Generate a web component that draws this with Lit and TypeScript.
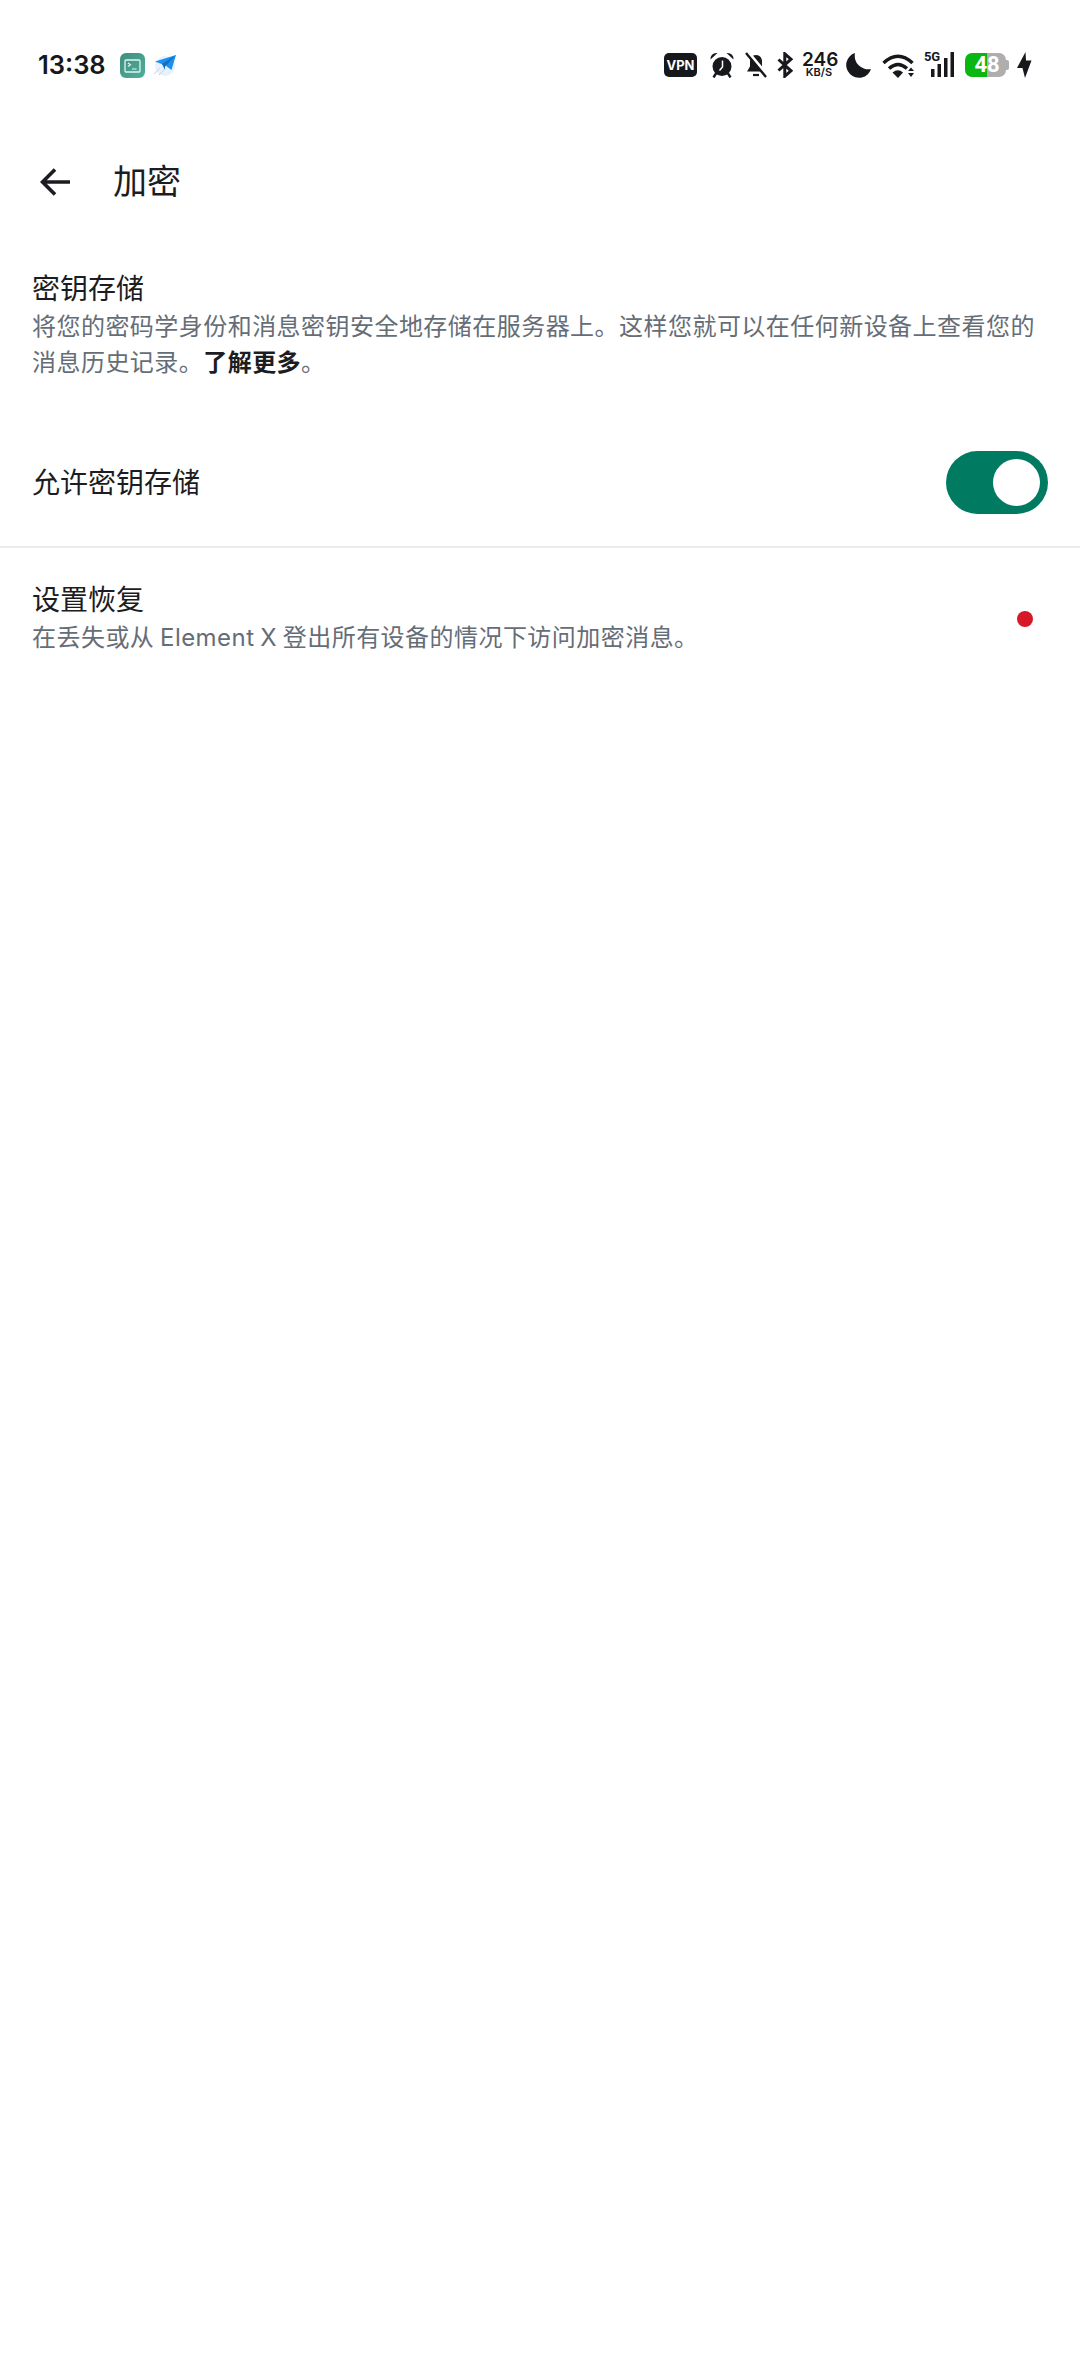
import { LitElement, css, html } from "lit"
import { customElement } from "lit/decorators.js"

@customElement("status-bar")
class StatusBar extends LitElement {
  static styles = css`
    :host {
      display: flex;
      align-items: center;
      height: 72px;
      margin-top: 29px;
      padding: 0 48px 0 38px;
      color: #16181c;
      font-family: Inter, "Noto Sans", sans-serif;
    }
    svg {
      display: block;
      flex: none;
    }
    .time {
      width: 68px;
      margin-right: 14px;
      font-size: 25.5px;
      font-weight: 600;
      line-height: 28px;
      white-space: nowrap;
    }
    .apps {
      display: flex;
      align-items: center;
      gap: 9px;
    }
    .icons {
      display: flex;
      align-items: center;
      margin-left: auto;
    }
    .vpn {
      width: 33px;
      height: 24px;
      margin-right: 13px;
      border-radius: 5px;
      background: #16181c;
      color: #fff;
      font-size: 13px;
      font-weight: 700;
      line-height: 24px;
      text-align: center;
    }
    .speed {
      width: 34px;
      margin: 0 10px 0 9px;
      text-align: center;
      font-weight: 600;
    }
    .speed div:first-child {
      font-size: 19px;
      line-height: 15px;
    }
    .speed div:last-child {
      font-size: 11px;
      line-height: 11px;
    }
    .signal {
      position: relative;
      width: 31px;
      height: 26px;
      margin: 0 11px 0 8px;
    }
    .signal span {
      position: absolute;
      left: 1px;
      top: -2px;
      font-family: Roboto, sans-serif;
      font-size: 13px;
      font-weight: 700;
      letter-spacing: -0.3px;
      line-height: 13px;
    }
    .battery {
      position: relative;
      box-sizing: border-box;
      width: 41px;
      height: 24px;
      margin-right: 11px;
      padding-left: 3px;
      border-radius: 7px;
      background: linear-gradient(90deg, #0ab711 0 53.6%, #aeaeae 53.6%);
      color: #fff;
      font-family: Roboto, sans-serif;
      font-size: 22px;
      font-weight: 700;
      line-height: 24px;
      text-align: center;
    }
    .battery::after {
      content: "";
      position: absolute;
      top: 7px;
      right: -3px;
      width: 3px;
      height: 10px;
      border-radius: 0 2px 2px 0;
      background: #aeaeae;
    }
  `

  render() {
    return html`
      <div class="time">13:38</div>
      <div class="apps">
        <svg width="25" height="25" viewBox="0 0 25 25">
          <defs>
            <linearGradient id="term" x1="0" y1="0" x2="1" y2="1">
              <stop offset="0" stop-color="#3f8f7f" />
              <stop offset="1" stop-color="#4fae9c" />
            </linearGradient>
          </defs>
          <rect width="25" height="25" rx="6" fill="url(#term)" />
          <rect x="5" y="7" width="15" height="12" rx="1" fill="none" stroke="#e4f3ef" stroke-width="1.3" />
          <path d="M8 10l2.500 1.800L8 13.600M12 16h4.500" fill="none" stroke="#e4f3ef" stroke-width="1.200" />
        </svg>
        <svg width="22" height="22" viewBox="0 0 22 22">
          <circle cx="11" cy="12" r="10" fill="#e6f1fb" />
          <path d="M1 7.500 22 1l-4.500 15-6-4.500z" fill="#1c90f0" />
          <path d="M8 10 22 1 11 12.500V16z" fill="#0f6fc4" />
          <path d="M0 20l6-6M5 21l5-5" stroke="#b9d6ee" stroke-width="1" />
        </svg>
      </div>
      <div class="icons">
        <div class="vpn">VPN</div>
        <svg width="24" height="26" viewBox="0 0 24 26" style="margin-right: 11px">
          <circle cx="12" cy="14.500" r="9.500" fill="#16181c" />
          <path d="M12.500 8.500v6.500l-3 3.500" fill="none" stroke="#fff" stroke-width="1.500" />
          <path d="M0.500 7.500Q0.500 0.500 7.500 1ZM23.500 7.500Q23.500 0.500 16.500 1Z" fill="#16181c" />
          <path d="M6 21.500l-2.500 4M18 21.500l2.500 4" stroke="#16181c" stroke-width="2.400" />
        </svg>
        <svg width="22" height="26" viewBox="0 0 22 26" style="margin-right: 10px">
          <path d="M11 3c-4 0-6 3-6 6.500v5L2 19.500h17.500L17 15V9.500C17 6 15 3 11 3z" fill="#16181c" />
          <path d="M8 23h6" stroke="#16181c" stroke-width="2.200" />
          <path d="M3.500 0.500 23 24" stroke="#fff" stroke-width="3" />
          <path d="M1 1 21 25" stroke="#16181c" stroke-width="2.400" />
        </svg>
        <svg width="16" height="26" viewBox="0 0 16 26">
          <path d="M1.500 7.500 14 18.800 7.800 24.200V1.800L14 7.200 1.500 18.500" fill="none" stroke="#16181c" stroke-width="3" />
        </svg>
        <div class="speed">
          <div>246</div>
          <div>KB/S</div>
        </div>
        <svg width="25" height="25" viewBox="0 0 25 25" style="margin-right: 11px">
          <path d="M9 0A12.700 12.700 0 1 0 25 16 13.500 13.500 0 0 1 9 0z" fill="#16181c" />
        </svg>
        <svg width="33" height="25" viewBox="0 0 33 25">
          <path d="M1.500 10Q16-3.500 30.500 10M7 15.500Q16 7.500 25 15.500" fill="none" stroke="#16181c" stroke-width="3.400" />
          <path d="M10.500 19.500Q16 15 21 19.500L16 25zM26 18l3-3.500 3 3.500zM26 20l3 4 3-4z" fill="#16181c" />
        </svg>
        <div class="signal">
          <span>5G</span>
          <svg width="31" height="26" viewBox="0 0 31 26">
            <path d="M8 17h3.500v8H8zM14.500 12H18v13h-3.500zM21 6h3.500v19H21zM27.500 0H31v25h-3.500z" fill="#16181c" />
          </svg>
        </div>
        <div class="battery">48</div>
        <svg width="15" height="26" viewBox="0 0 15 26">
          <path d="M8.500 0 0 16h5.500L8 26 14.500 8.500H9z" fill="#16181c" />
        </svg>
      </div>
    `
  }
}

@customElement("app-root")
class AppRoot extends LitElement {
  static styles = css`
    :host {
      display: block;
      min-height: 2376px;
      background: #fff;
      color: #1b1d22;
      font-family: Inter, "Noto Sans CJK SC", sans-serif;
    }
    .bar {
      display: flex;
      align-items: center;
      gap: 41px;
      height: 84px;
      margin-top: 39px;
      padding-left: 40px;
    }
    .bar svg {
      display: block;
    }
    .bar h1 {
      margin: 0;
      font-size: 34px;
      font-weight: 400;
      line-height: 44px;
    }
    .intro {
      padding: 45px 32px 0;
    }
    .title {
      font-size: 28px;
      line-height: 40px;
    }
    .desc {
      color: #656d77;
      font-size: 24px;
      letter-spacing: 0.46px;
      word-spacing: -1.5px;
      line-height: 36px;
    }
    .desc b {
      color: #1b1d22;
      font-weight: 700;
    }
    .row {
      display: flex;
      align-items: center;
      justify-content: space-between;
      padding: 0 32px;
    }
    .allow {
      height: 127px;
      margin-top: 38px;
      border-bottom: 2px solid #e9ebee;
    }
    .toggle {
      display: flex;
      justify-content: flex-end;
      align-items: center;
      box-sizing: border-box;
      width: 102px;
      height: 63px;
      padding-right: 8px;
      border-radius: 32px;
      background: #007a61;
    }
    .toggle i {
      width: 47px;
      height: 47px;
      border-radius: 50%;
      background: #fff;
    }
    .recovery {
      padding-top: 32px;
    }
    .dot {
      width: 16px;
      height: 16px;
      margin: 2px 15px 0 0;
      border-radius: 50%;
      background: #d51928;
    }
  `

  render() {
    return html`
      <status-bar></status-bar>
      <header class="bar">
        <svg width="32" height="32" viewBox="0 0 32 32">
          <path d="M30 16H3M15 3.500 2.500 16 15 28.500" fill="none" stroke="#1b1d22" stroke-width="3.600" />
        </svg>
        <h1>加密</h1>
      </header>
      <section class="intro">
        <div class="title">密钥存储</div>
        <div class="desc">
          将您的密码学身份和消息密钥安全地存储在服务器上。这样您就可以在任何新设备上查看您的消息历史记录。<b>了解更多</b>。
        </div>
      </section>
      <div class="row allow">
        <div class="title">允许密钥存储</div>
        <div class="toggle"><i></i></div>
      </div>
      <div class="row recovery">
        <div>
          <div class="title">设置恢复</div>
          <div class="desc">在丢失或从 Element X 登出所有设备的情况下访问加密消息。</div>
        </div>
        <div class="dot"></div>
      </div>
    `
  }
}
